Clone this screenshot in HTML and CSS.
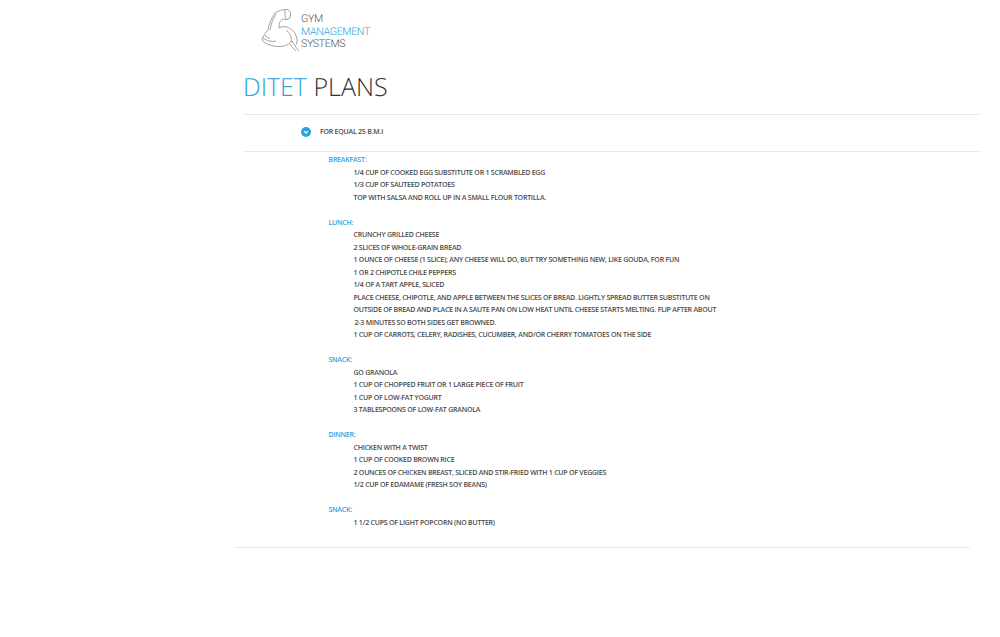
FILE: index.html
```html
<!DOCTYPE html>
<html>
<head>
<meta name="viewport" content="width=device-width, initial-scale=1">
<link rel="stylesheet" href="styles.css">
</head>
<body>
<div class="page">

  <div class="logo">
    <svg class="logo-arm" width="40" height="44" viewBox="0 0 40 44" fill="none" stroke="#666" stroke-width="0.6">
      <path d="M7 22 C8 16 11 9 14 5 C17 3 22 1 26 1.500 C28 2 29 3 29.500 5 L29 10 C27 12 24 12 21.500 11 C19 13 18 15 18 20"/>
      <path d="M9 22 C10 16 12 10 15.500 6"/>
      <path d="M24 2 C23.500 5 24 8 25 11"/>
      <path d="M18 20 C23 17 29 19 33 24 C36 28 37 33 35 37"/>
      <path d="M7 22 C4 25 2 28 1 32 C3 35 8 37 13 38 C20 39.500 27 38 31 33"/>
      <path d="M2 30 C6 33 11 34 15 33"/>
      <path d="M4 27 C5 29 7 30 9 30"/>
      <path d="M25 22 C29 25 31 29 30 34"/>
      <path d="M31 33 C33 36 35 40 38 43"/>
      <path d="M29 36 C31 39 33 41 35 43"/>
    </svg>
    <div class="logo-text">
      <span>GYM</span>
      <span class="blue">MANAGEMENT</span>
      <span>SYSTEMS</span>
    </div>
  </div>

  <h1 class="title"><span class="blue">DITET</span> PLANS</h1>

  <div class="plan-head">
    <svg class="toggle" width="10" height="10" viewBox="0 0 10 10">
      <circle cx="5" cy="5" r="5" fill="#29a3dc"/>
      <path d="M3 4.200 L5 6.200 L7 4.200" fill="none" stroke="#ffffff" stroke-width="1.200"/>
    </svg>
    <span>FOR EQUAL 25 B.M.I</span>
  </div>

  <div class="plan-body">
    <h4>BREAKFAST:</h4>
    <ul>
      <li>1/4 CUP OF COOKED EGG SUBSTITUTE OR 1 SCRAMBLED EGG</li>
      <li>1/3 CUP OF SAUTEED POTATOES</li>
      <li>TOP WITH SALSA AND ROLL UP IN A SMALL FLOUR TORTILLA.</li>
    </ul>

    <h4>LUNCH:</h4>
    <ul>
      <li>CRUNCHY GRILLED CHEESE</li>
      <li>2 SLICES OF WHOLE-GRAIN BREAD</li>
      <li>1 OUNCE OF CHEESE (1 SLICE); ANY CHEESE WILL DO, BUT TRY SOMETHING NEW, LIKE GOUDA, FOR FUN</li>
      <li>1 OR 2 CHIPOTLE CHILE PEPPERS</li>
      <li>1/4 OF A TART APPLE, SLICED</li>
      <li>PLACE CHEESE, CHIPOTLE, AND APPLE BETWEEN THE SLICES OF BREAD. LIGHTLY SPREAD BUTTER SUBSTITUTE ON</li>
      <li>OUTSIDE OF BREAD AND PLACE IN A SAUTE PAN ON LOW HEAT UNTIL CHEESE STARTS MELTING. FLIP AFTER ABOUT</li>
      <li class="nudge">2-3 MINUTES SO BOTH SIDES GET BROWNED.</li>
      <li>1 CUP OF CARROTS, CELERY, RADISHES, CUCUMBER, AND/OR CHERRY TOMATOES ON THE SIDE</li>
    </ul>

    <h4>SNACK:</h4>
    <ul>
      <li>GO GRANOLA</li>
      <li>1 CUP OF CHOPPED FRUIT OR 1 LARGE PIECE OF FRUIT</li>
      <li>1 CUP OF LOW-FAT YOGURT</li>
      <li>3 TABLESPOONS OF LOW-FAT GRANOLA</li>
    </ul>

    <h4>DINNER:</h4>
    <ul>
      <li>CHICKEN WITH A TWIST</li>
      <li>1 CUP OF COOKED BROWN RICE</li>
      <li>2 OUNCES OF CHICKEN BREAST, SLICED AND STIR-FRIED WITH 1 CUP OF VEGGIES</li>
      <li>1/2 CUP OF EDAMAME (FRESH SOY BEANS)</li>
    </ul>

    <h4>SNACK:</h4>
    <ul>
      <li>1 1/2 CUPS OF LIGHT POPCORN (NO BUTTER)</li>
    </ul>
  </div>

  <div class="bottom-rule"></div>

</div>
</body>
</html>
```

FILE: styles.css
```css
html, body {
  margin: 0;
  padding: 0;
  background: #ffffff;
}

body {
  font-family: "Open Sans", sans-serif;
  color: #4a4a4a;
  text-rendering: geometricPrecision;
}

.page {
  width: 1000px;
  height: 637px;
  overflow: hidden;
}

.blue {
  color: #29a3dc;
}

/* Logo */
.logo {
  display: flex;
  align-items: flex-start;
  margin-left: 261px;
  padding-top: 8px;
  height: 44px;
}

.logo-text {
  padding-top: 5px;
  font-family: Roboto, sans-serif;
  font-weight: 300;
  font-size: 10.700px;
  line-height: 12.600px;
  color: #555;
  letter-spacing: -0.4px;
}

.logo-text span {
  display: block;
}

/* Title */
.title {
  margin: 19px 0 0 243px;
  font-weight: 300;
  font-size: 25px;
  line-height: 33px;
  color: #333;
}

/* Accordion head */
.plan-head {
  display: flex;
  align-items: center;
  margin: 10px 20px 0 245px;
  height: 34px;
  padding-bottom: 2px;
  border-top: 1px dotted #d5d5d5;
  border-bottom: 1px dotted #d5d5d5;
  padding-left: 56px;
  font-size: 7px;
  font-weight: 600;
  letter-spacing: -0.23px;
}

.toggle {
  margin-right: 9px;
}

/* Accordion body */
.plan-body {
  margin-left: 328.500px;
  padding-top: 3px;
  font-size: 7px;
  font-weight: 600;
  line-height: 12.500px;
  letter-spacing: -0.23px;
}

.plan-body h4 {
  margin: 0;
  font-size: 7px;
  font-weight: 600;
  color: #29a3dc;
}

.plan-body ul {
  list-style: none;
  margin: 0 0 12.500px 25px;
  padding: 0;
}

.nudge {
  padding-left: 1px;
}

.bottom-rule {
  margin: 17px 30px 0 235px;
  border-top: 1px dotted #d5d5d5;
}
```
